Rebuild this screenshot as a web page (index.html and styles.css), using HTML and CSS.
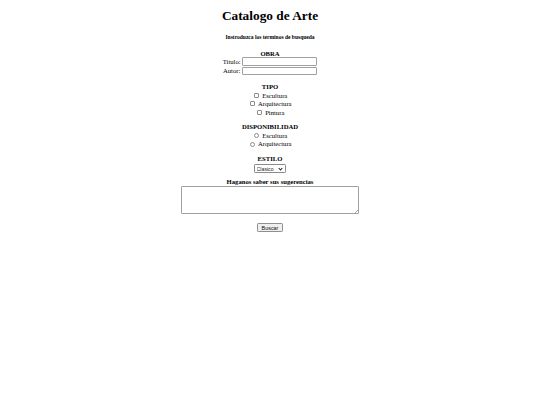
FILE: index.html
```
<!DOCTYPE html>
<html lang="es">
<head>
<meta charset="utf-8">
<title>Catalogo de Arte</title>
<link rel="stylesheet" href="styles.css">
</head>
<body class="page">
<h1 class="title">Catalogo de Arte</h1>
<h5 class="subtitle">Instroduzca los terminos de busqueda</h5>
<form class="search">
  <div class="group">
    <div class="group-title">OBRA</div>
    <div class="field"><label class="label" for="titulo">Titulo:</label><input class="text" id="titulo" type="text"></div>
    <div class="field"><label class="label" for="autor">Autor:</label><input class="text" id="autor" type="text"></div>
  </div>
  <div class="group">
    <div class="group-title">TIPO</div>
    <label class="option"><input class="check" type="checkbox">Escultura</label>
    <label class="option"><input class="check" type="checkbox">Arquitectura</label>
    <label class="option"><input class="check" type="checkbox">Pintura</label>
  </div>
  <div class="group">
    <div class="group-title">DISPONIBILIDAD</div>
    <label class="option"><input class="radio" type="radio" name="disp">Escultura</label>
    <label class="option"><input class="radio" type="radio" name="disp">Arquitectura</label>
  </div>
  <div class="group">
    <div class="group-title">ESTILO</div>
    <div class="select-row"><span class="select-wrap"><select class="select"><option>Clasico</option><option>Moderno</option></select></span></div>
  </div>
  <div class="group">
    <div class="group-title">Haganos saber sus sugerencias</div>
    <div class="area-row"><span class="area-wrap"><textarea class="area"></textarea></span></div>
  </div>
  <div class="group">
    <button class="button" type="button">Buscar</button>
  </div>
</form>
</body>
</html>
```
FILE: styles.css
```
html { background: #fff; }
.page {
  margin: 0 3.333px 3.333px;
  padding-top: 0.1px;
  font-family: "Liberation Serif", "Times New Roman", serif;
  font-size: 6.667px;
  color: #000;
  text-align: center;
}
.title {
  font-size: 2em;
  margin: 8.1px 0 8.9px;
  font-weight: bold;
}
.subtitle {
  font-size: 0.83em;
  margin: 9.7px 0 10.2px;
  font-weight: bold;
}
.search { margin: 0; }
.group { margin-top: 7.66px; }
.group:first-child { margin-top: 0; }
.group-title { font-weight: bold; }
.field {
  display: flex;
  justify-content: center;
  align-items: center;
  gap: 1.7px;
  height: 9.2px;
}
.text {
  box-sizing: border-box;
  width: 75px;
  height: 8.6px;
  padding: 0 1px;
  margin: 0;
  border: 0.8px solid #a0a0a0;
  border-radius: 1px;
  font-size: 5.5px;
}
.option {
  box-sizing: border-box;
  display: flex;
  justify-content: center;
  align-items: center;
  height: 8.5px;
  padding-top: 2.2px;
  line-height: 7.66px;
}
.check, .radio {
  appearance: none;
  -webkit-appearance: none;
  box-sizing: border-box;
  flex: none;
  width: 5px;
  height: 5px;
  margin: 0 2.9px 0 1.6px;
  border: 0.6px solid #8c8c8c;
  background: #fff;
}
.check { border-radius: 1px; }
.radio { border-radius: 50%; }
.select-row { padding-top: 2.5px; margin-bottom: -2px; }
.select-wrap {
  position: relative;
  display: inline-block;
  vertical-align: top;
}
.select-wrap::after {
  content: "";
  position: absolute;
  right: 4.2px;
  top: 2.2px;
  width: 2px;
  height: 2px;
  border-right: 0.9px solid #222;
  border-bottom: 0.9px solid #222;
  transform: rotate(45deg);
  pointer-events: none;
}
.select {
  appearance: none;
  -webkit-appearance: none;
  box-sizing: border-box;
  display: block;
  width: 32px;
  height: 8.3px;
  font-size: 5.2px;
  line-height: 6px;
  padding: 0 0 0 1.6px;
  margin: 0;
  border: 0.7px solid #8a8a8a;
  border-radius: 1.2px;
  background: #fff;
  color: #222;
  text-align: left;
  font-family: "Liberation Sans", Arial, sans-serif;
}
.area-wrap {
  position: relative;
  display: inline-block;
  vertical-align: bottom;
}
.area-wrap::after {
  content: "";
  position: absolute;
  right: 1.2px;
  bottom: 1.2px;
  width: 3px;
  height: 3px;
  background: linear-gradient(135deg, transparent 45%, #a8a8a8 45%, #a8a8a8 55%, transparent 55%, transparent 72%, #a8a8a8 72%, #a8a8a8 82%, transparent 82%);
  pointer-events: none;
}
.area {
  box-sizing: border-box;
  display: block;
  width: 178px;
  height: 28.5px;
  margin: 0.6px 0 0;
  border: 0.8px solid #a0a0a0;
  border-radius: 1px;
  font-size: 5.5px;
  padding: 1px;
  resize: none;
}
.button {
  box-sizing: border-box;
  width: 25.5px;
  height: 8.6px;
  padding: 0;
  margin-top: 1.2px;
  font-size: 5.4px;
  font-family: "Liberation Sans", Arial, sans-serif;
  background: #efefef;
  border: 0.7px solid #8f8f8f;
  border-radius: 1.2px;
  color: #111;
}
```
